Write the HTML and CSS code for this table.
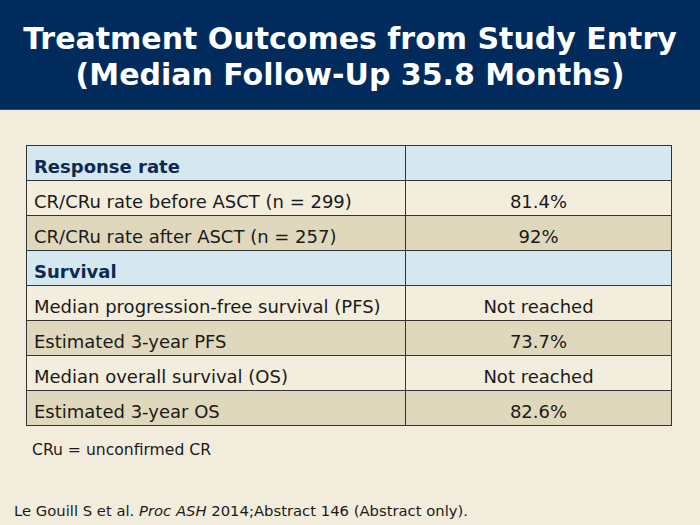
FILE: index.html
```html
<!DOCTYPE html>
<html>
<head>
<meta charset="utf-8">
<link rel="stylesheet" href="styles.css">
</head>
<body>
<div class="slide">
  <header class="title-bar">
    <h1>Treatment Outcomes from Study Entry<br>(Median Follow-Up 35.8 Months)</h1>
  </header>
  <main class="content">
    <table class="outcomes">
      <tr class="section"><td class="label">Response rate</td><td></td></tr>
      <tr class="light"><td>CR/CRu rate before ASCT (n = 299)</td><td class="val">81.4%</td></tr>
      <tr class="dark"><td>CR/CRu rate after ASCT (n = 257)</td><td class="val">92%</td></tr>
      <tr class="section"><td class="label">Survival</td><td></td></tr>
      <tr class="light"><td>Median progression-free survival (PFS)</td><td class="val">Not reached</td></tr>
      <tr class="dark"><td>Estimated 3-year PFS</td><td class="val">73.7%</td></tr>
      <tr class="light"><td>Median overall survival (OS)</td><td class="val">Not reached</td></tr>
      <tr class="dark"><td>Estimated 3-year OS</td><td class="val">82.6%</td></tr>
    </table>
    <p class="note">CRu = unconfirmed CR</p>
    <p class="ref">Le Gouill S et al. <i>Proc ASH</i> 2014;Abstract 146 (Abstract only).</p>
  </main>
</div>
</body>
</html>
```
FILE: styles.css
```css
html, body {
  margin: 0;
  padding: 0;
}
body {
  width: 700px;
  height: 525px;
  background: #F1ECDC;
  font-family: "DejaVu Sans", Verdana, sans-serif;
  overflow: hidden;
}
.slide {
  width: 700px;
  height: 525px;
  display: flex;
  flex-direction: column;
}
.title-bar {
  background: #002B5C;
  height: 110px;
  border-bottom: 1px solid #2a4a6a;
  display: flex;
  align-items: center;
  justify-content: center;
  box-sizing: border-box;
  flex-shrink: 0;
}
.title-bar h1 {
  margin: 0;
  color: #fff;
  font-size: 30px;
  font-weight: bold;
  line-height: 36px;
  text-align: center;
  padding-top: 5px;
}
.content {
  padding: 35px 0 0 26px;
}
.outcomes {
  border-collapse: collapse;
  width: 646px;
  font-size: 18px;
  color: #1a1a1a;
}
.outcomes td {
  border: 1.5px solid #333;
  height: 35px;
  padding: 6px 0 0 7px;
  box-sizing: border-box;
}
.outcomes td:first-child {
  width: 379px;
}
.outcomes td.val {
  text-align: center;
  padding: 6px 0 0 0;
}
.section td {
  background: #D5E8F0;
}
.section td.label {
  font-weight: bold;
  color: #0E2A50;
}
.light td {
  background: #F2EDDC;
}
.dark td {
  background: #E0D8BC;
}
.note {
  margin: 15px 0 0 6px;
  font-size: 15.6px;
  color: #1a1a1a;
}
.ref {
  margin: 43px 0 0 -12px;
  font-size: 14.8px;
  color: #1a1a1a;
}
```
